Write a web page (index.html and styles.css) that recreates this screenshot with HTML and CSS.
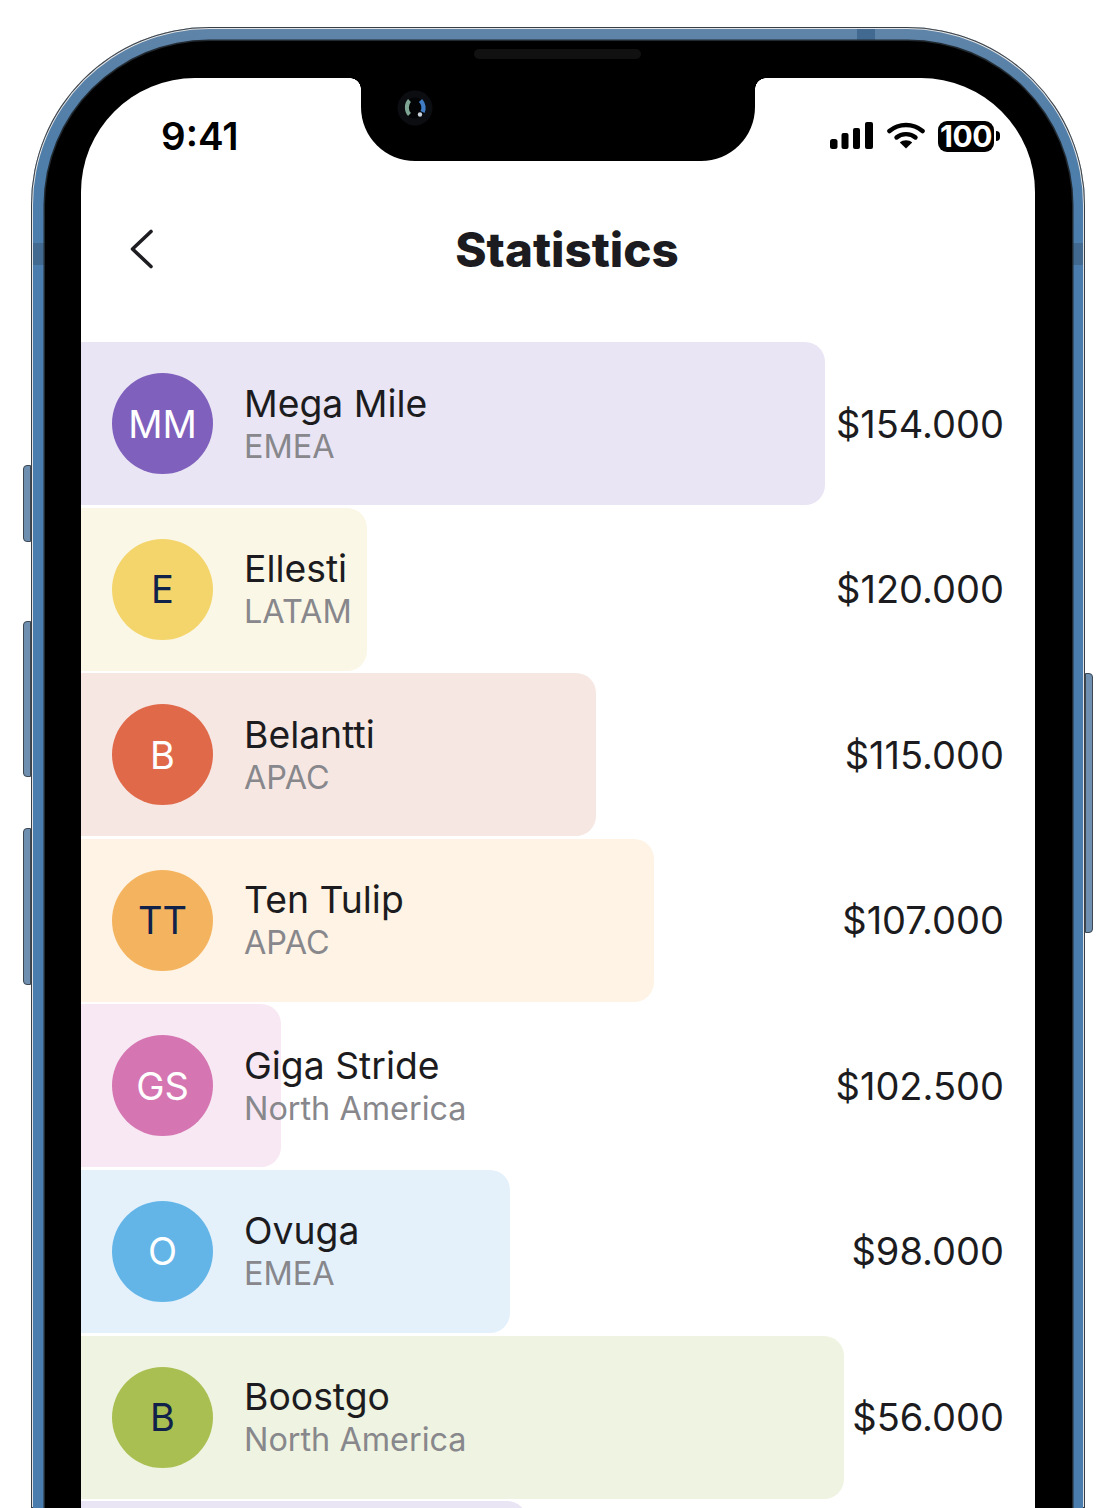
FILE: index.html
```html
<!DOCTYPE html>
<html lang="en">
<head>
    <meta charset="UTF-8">
    <title>Statistics</title>
    <link rel="stylesheet" href="styles.css">
</head>
<body>
    <div class="phone">
        <span class="side-btn side-mute"></span>
        <span class="side-btn side-up"></span>
        <span class="side-btn side-down"></span>
        <span class="side-btn side-power"></span>
        <span class="antenna antenna-left"></span>
        <span class="antenna antenna-right"></span>
        <span class="antenna antenna-top"></span>
        <div class="bezel">
            <span class="speaker"></span>
            <div class="screen">
                <div class="status">
                    <div class="time">9:41</div>
                    <div class="notch">
                        <svg class="camera" width="36" height="36" viewBox="0 0 36 36">
                            <circle cx="18" cy="18" r="17.500" fill="#0b0d11"/>
                            <circle cx="18" cy="18" r="10.500" fill="#030405"/>
                            <path d="M12.500 10.500C9 14 9 21 12.500 24.500" fill="none" stroke="#7fa595" stroke-width="4"/>
                            <path d="M23.500 10.500C27 14 27 19 25.500 22" fill="none" stroke="#3f7cc4" stroke-width="4.500"/>
                            <circle cx="23" cy="24.500" r="2.200" fill="#c9d3dc"/>
                        </svg>
                    </div>
                    <div class="status-icons">
                        <svg class="signal" width="44" height="28" viewBox="0 0 44 28">
                            <rect x="0" y="17" width="7.500" height="10" rx="2.500"/>
                            <rect x="11.500" y="11" width="7" height="16" rx="2"/>
                            <rect x="23" y="6" width="7" height="21" rx="2"/>
                            <rect x="35" y="0" width="8" height="27" rx="2"/>
                        </svg>
                        <svg class="wifi" width="38" height="27" viewBox="0 0 38 27">
                            <path d="M2.500 9C12 1 26 1 35.500 9" fill="none" stroke="#000" stroke-width="4.600" stroke-linecap="round"/>
                            <path d="M9.500 15.500C14.500 11 23.500 11 28.500 15.500" fill="none" stroke="#000" stroke-width="4.400" stroke-linecap="round"/>
                            <path d="M19 26.500L12.800 20.600C16 17.600 22 17.600 25.200 20.600Z"/>
                        </svg>
                        <div class="battery">100</div>
                        <span class="battery-nub"></span>
                    </div>
                </div>

                <div class="header">
                    <svg class="back" width="26" height="40" viewBox="0 0 26 40">
                        <path d="M22 2.500L3.500 20L22 37.500" fill="none" stroke="#1d1d22" stroke-width="3.600" stroke-linecap="round" stroke-linejoin="round"/>
                    </svg>
                    <h1>Statistics</h1>
                </div>

                <div class="list">
                    <div class="row purple">
                        <div class="bar" style="width:744px"></div>
                        <div class="row-body">
                            <div class="avatar">MM</div>
                            <div class="info"><div class="name">Mega Mile</div><div class="region">EMEA</div></div>
                            <div class="amount">$154.000</div>
                        </div>
                    </div>
                    <div class="row yellow">
                        <div class="bar" style="width:286px"></div>
                        <div class="row-body">
                            <div class="avatar">E</div>
                            <div class="info"><div class="name">Ellesti</div><div class="region">LATAM</div></div>
                            <div class="amount">$120.000</div>
                        </div>
                    </div>
                    <div class="row red">
                        <div class="bar" style="width:515px"></div>
                        <div class="row-body">
                            <div class="avatar">B</div>
                            <div class="info"><div class="name">Belantti</div><div class="region">APAC</div></div>
                            <div class="amount">$115.000</div>
                        </div>
                    </div>
                    <div class="row orange">
                        <div class="bar" style="width:573px"></div>
                        <div class="row-body">
                            <div class="avatar">TT</div>
                            <div class="info"><div class="name">Ten Tulip</div><div class="region">APAC</div></div>
                            <div class="amount">$107.000</div>
                        </div>
                    </div>
                    <div class="row pink">
                        <div class="bar" style="width:200px"></div>
                        <div class="row-body">
                            <div class="avatar">GS</div>
                            <div class="info"><div class="name">Giga Stride</div><div class="region">North America</div></div>
                            <div class="amount">$102.500</div>
                        </div>
                    </div>
                    <div class="row blue">
                        <div class="bar" style="width:429px"></div>
                        <div class="row-body">
                            <div class="avatar">O</div>
                            <div class="info"><div class="name">Ovuga</div><div class="region">EMEA</div></div>
                            <div class="amount">$98.000</div>
                        </div>
                    </div>
                    <div class="row green">
                        <div class="bar" style="width:763px"></div>
                        <div class="row-body">
                            <div class="avatar">B</div>
                            <div class="info"><div class="name">Boostgo</div><div class="region">North America</div></div>
                            <div class="amount">$56.000</div>
                        </div>
                    </div>
                    <div class="row purple">
                        <div class="bar" style="width:446px"></div>
                    </div>
                </div>
            </div>
        </div>
    </div>
</body>
</html>
```

FILE: styles.css
```css
html, body { margin: 0; height: 1508px; overflow: hidden; background: #fff; }
body { font-family: Inter, "Liberation Sans", sans-serif; color: #1c1c20; }

/* phone frame */
.phone { position: relative; width: 1054px; height: 1481px; margin: 27px 0 0 31px; padding: 14px 13px 0 14px; box-sizing: border-box; border-radius: 178px 178px 0 0; background: linear-gradient(#5f84a8 0, #4f7ea9 120px, #4a7dae 240px); box-shadow: inset 0 0 0 1px #3a3f45, inset 0 0 0 2px #dfe3e6; }
.phone::after { content: ""; position: absolute; left: 2px; right: 2px; bottom: 0; height: 2px; background: #4a7dae; }
.bezel { position: relative; z-index: 1; height: 100%; padding: 37px 37px 0 36px; box-sizing: border-box; background: #000; border-radius: 164px 164px 0 0; box-shadow: 0 0 0 1.500px #222a31; }
.screen { height: 100%; background: #fff; border-radius: 114px 114px 0 0; overflow: hidden; }
.speaker { position: absolute; left: 429px; top: 8px; width: 167px; height: 10px; background: #111; border-radius: 5px; }
.side-btn { position: absolute; width: 8px; box-sizing: border-box; background: #6f8fb0; border: 1px solid #3d4853; }
.side-mute { left: -8px; top: 438px; height: 77px; border-radius: 4px 0 0 4px; }
.side-up { left: -8px; top: 594px; height: 156px; border-radius: 4px 0 0 4px; }
.side-down { left: -8px; top: 801px; height: 157px; border-radius: 4px 0 0 4px; }
.side-power { right: -8px; top: 646px; height: 260px; border-radius: 0 4px 4px 0; }
.antenna { position: absolute; background: #426a90; }
.antenna-left { left: 2px; top: 216px; width: 12px; height: 22px; }
.antenna-right { right: 2px; top: 216px; width: 12px; height: 22px; }
.antenna-top { left: 826px; top: 2px; width: 18px; height: 12px; }

/* status bar */
.status { display: flex; height: 83px; }
.time { width: 200px; padding: 39px 0 0 80px; font-size: 38.500px; font-weight: 600; line-height: 38px; color: #000; }
.notch { position: relative; display: flex; align-items: center; width: 394px; height: 83px; padding: 0 0 24px 36px; box-sizing: border-box; background: #000; border-radius: 0 0 54px 54px; }
.notch::before, .notch::after { content: ""; position: absolute; top: 0; width: 11px; height: 11px; }
.notch::before { left: -11px; background: radial-gradient(circle at 0 100%, transparent 10.500px, #000 11px); }
.notch::after { right: -11px; background: radial-gradient(circle at 100% 100%, transparent 10.500px, #000 11px); }
.status-icons { display: flex; align-items: flex-start; margin-left: 75px; padding-top: 44px; }
.signal { margin-right: 13px; }
.wifi { margin-right: 13px; }
.battery { width: 56px; height: 31px; margin-top: -1px; background: #000; border-radius: 9px; color: #fff; font-size: 30px; font-weight: 700; line-height: 31px; text-align: center; letter-spacing: -0.5px; }
.battery-nub { width: 4px; height: 10px; margin: 9px 0 0 2px; background: #000; border-radius: 0 5px 5px 0; }

/* header */
.header { display: flex; align-items: center; height: 105px; margin-top: 36px; padding: 0 56px 0 48px; }
.back { margin-top: -2px; }
h1 { flex: 1; margin: 0; font-size: 47.500px; font-weight: 800; text-align: center; color: #1c1c20; }

/* list */
.list { display: flex; flex-direction: column; gap: 2.600px; margin-top: 40px; }
.row { display: grid; height: 163px; flex-shrink: 0; }
.bar, .row-body { grid-area: 1 / 1; }
.bar { border-radius: 0 20px 20px 0; }
.row-body { display: flex; align-items: center; padding: 0 31px 0 31px; }
.avatar { display: flex; align-items: center; justify-content: center; width: 101px; height: 101px; border-radius: 50%; font-size: 38px; color: #fff; }
.info { flex: 1; margin-left: 31px; }
.name { font-size: 37.300px; line-height: 46px; }
.region { font-size: 32.400px; line-height: 40px; color: #87878c; }
.amount { font-size: 38px; }

.purple .bar { background: #e9e5f4; }
.purple .avatar { background: #7f60bd; }
.yellow .bar { background: #fbf7e6; }
.yellow .avatar { background: #f3d56c; color: #10214a; }
.red .bar { background: #f6e7e3; }
.red .avatar { background: #e0694a; }
.orange .bar { background: #fef3e4; }
.orange .avatar { background: #f4b45f; color: #10214a; }
.pink .bar { background: #f8e8f3; }
.pink .avatar { background: #d576b2; }
.blue .bar { background: #e4f1fb; }
.blue .avatar { background: #63b5e8; }
.green .bar { background: #eff3e1; }
.green .avatar { background: #a9bf52; color: #10214a; }
```
